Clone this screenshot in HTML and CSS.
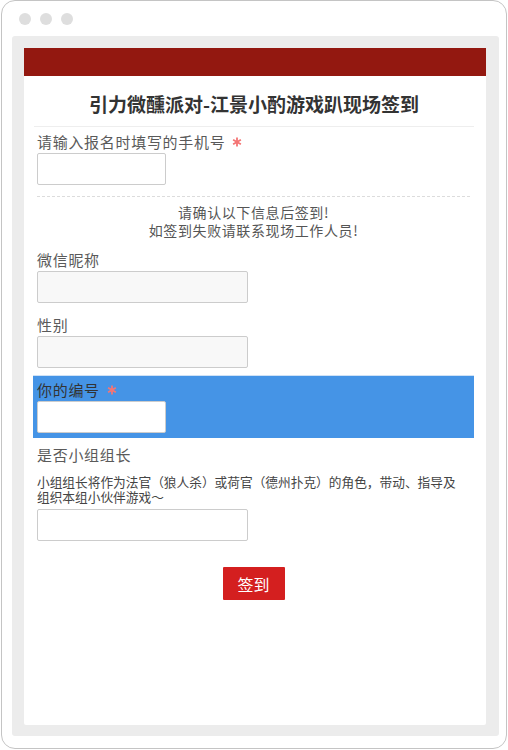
FILE: index.html
```html
<!DOCTYPE html>
<html lang="zh">
<head>
<meta charset="utf-8">
<title>签到</title>
<link rel="stylesheet" href="styles.css">
</head>
<body>
<div class="frame">
  <div class="dots"><span class="dot"></span><span class="dot"></span><span class="dot"></span></div>
  <div class="window">
    <div class="card">
      <div class="banner"></div>
      <div class="form">
        <h1 class="title">引力微醺派对-江景小酌游戏趴现场签到</h1>
        <div class="field">
          <div class="label">请输入报名时填写的手机号<svg class="req" viewBox="0 0 10 10" width="10" height="10"><path d="M5 0.5V9.5M1.1 2.75L8.9 7.25M1.1 7.25L8.9 2.75" stroke="#f47575" stroke-width="1.8"/></svg></div>
          <div class="input short"></div>
        </div>
        <div class="divider"></div>
        <div class="notice"><div>请确认以下信息后签到!</div><div>如签到失败请联系现场工作人员!</div></div>
        <div class="field first">
          <div class="label">微信昵称</div>
          <div class="input long disabled"></div>
        </div>
        <div class="field">
          <div class="label">性别</div>
          <div class="input long disabled"></div>
        </div>
        <div class="field active">
          <div class="label">你的编号<svg class="req" viewBox="0 0 10 10" width="10" height="10"><path d="M5 0.5V9.5M1.1 2.75L8.9 7.25M1.1 7.25L8.9 2.75" stroke="#f47575" stroke-width="1.8"/></svg></div>
          <div class="input short"></div>
        </div>
        <div class="field">
          <div class="label">是否小组组长</div>
          <div class="desc">小组组长将作为法官（狼人杀）或荷官（德州扑克）的角色，带动、指导及组织本组小伙伴游戏～</div>
          <div class="input long desc-input"></div>
        </div>
        <div class="actions"><button class="submit">签到</button></div>
      </div>
    </div>
  </div>
</div>
</body>
</html>
```
FILE: styles.css
```css
* { box-sizing: border-box; }
html, body { margin: 0; padding: 0; background: #fff; }
body { font-family: "Noto Sans CJK SC", "Noto Sans", sans-serif; }

.frame {
  margin-left: 1px;
  width: 506px;
  height: 749px;
  border: 1px solid #c4c4c4;
  border-radius: 14px;
  padding: 0 7px 0 10px;
}
.dots {
  height: 35px;
  display: flex;
  align-items: center;
  gap: 9px;
  padding-left: 7px;
}
.dot {
  width: 12px;
  height: 12px;
  border-radius: 50%;
  background: #dedede;
}
.window {
  height: 700px;
  background: #ececec;
  border-radius: 3px;
  padding: 12px 13px 11px 12px;
}
.card {
  height: 677px;
  background: #fff;
  border-radius: 0 0 2px 2px;
}
.banner {
  height: 28px;
  background: #931810;
}
.form {
  padding: 0 12px 0 9px;
}
.title {
  margin: 0 0 0 1px;
  padding: 15px 0 9px;
  text-align: center;
  font-size: 19px;
  line-height: 26px;
  font-weight: bold;
  color: #333;
  border-bottom: 1px solid #eeeeee;
}
.field {
  padding: 5px 4px;
  margin-top: 2px;
}
.field.first { margin-top: 6px; }
.title + .field { margin-top: 0; }
.label {
  display: flex;
  align-items: center;
  font-size: 15px;
  line-height: 20px;
  height: 20px;
  letter-spacing: 0.7px;
  color: #5a5a5a;
}
.req {
  margin-left: 7px;
  flex: none;
}
.input {
  margin-top: 1px;
  height: 32px;
  border: 1px solid #cccccc;
  border-radius: 2px;
  background: #fff;
}
.input.short { width: 129px; }
.input.long { width: 211px; }
.input.disabled { background: #f8f8f8; }
.field.active {
  background: #4594e6;
  border-top: 1px solid #cfe2f6;
  padding-top: 4px;
}
.field.active .label { color: #333; }
.divider {
  margin: 6px 4px 0;
  border-top: 1px dashed #dcdcdc;
}
.notice {
  margin-top: 6px;
  text-align: center;
  font-size: 14px;
  line-height: 18px;
  letter-spacing: 0.6px;
  color: #555;
}
.desc {
  margin-top: 9px;
  width: 424px;
  font-size: 12.7px;
  line-height: 15px;
  color: #444;
}
.desc-input { margin-top: 5px; }
.actions {
  display: flex;
  justify-content: center;
  margin-top: 21px;
}
.submit {
  width: 62px;
  height: 33px;
  border: none;
  border-radius: 1px;
  background: #d41f1f;
  color: #fff;
  font-family: "Noto Sans CJK SC", sans-serif;
  font-size: 16px;
  padding: 0;
}
```
